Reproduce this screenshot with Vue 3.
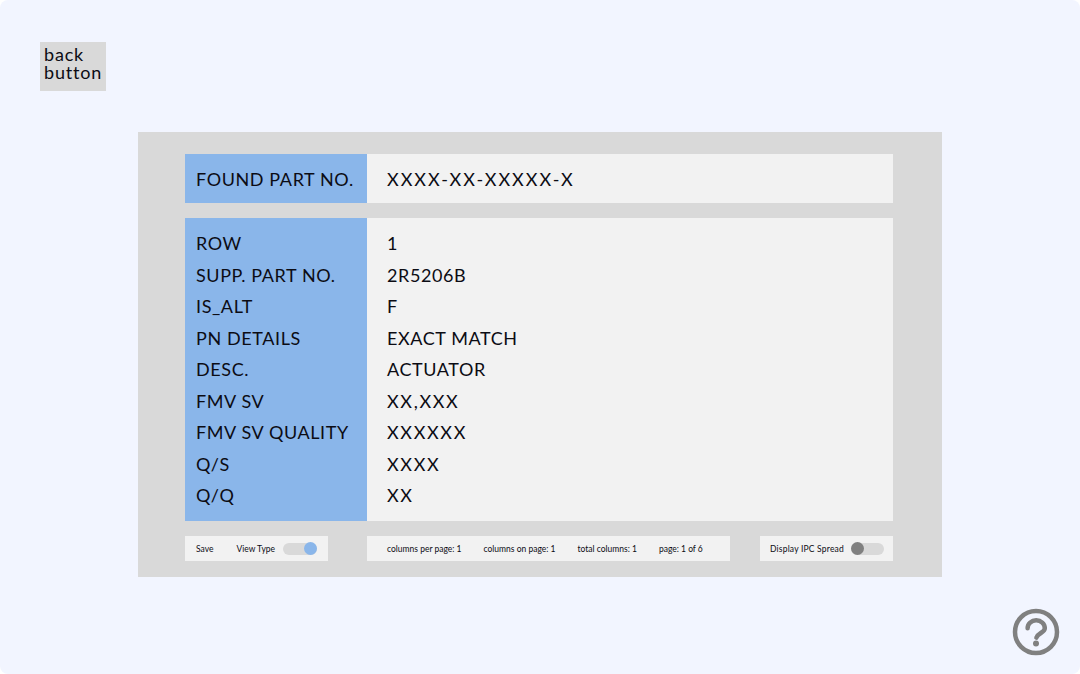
<script setup>
const rows = [
  ['ROW', '1'],
  ['SUPP. PART NO.', '2R5206B'],
  ['IS_ALT', 'F'],
  ['PN DETAILS', 'EXACT MATCH'],
  ['DESC.', 'ACTUATOR'],
  ['FMV SV', 'XX,XXX', true],
  ['FMV SV QUALITY', 'XXXXXX', true],
  ['Q/S', 'XXXX', true],
  ['Q/Q', 'XX', true],
]
const stats = ['columns per page: 1', 'columns on page: 1', 'total columns: 1', 'page: 1 of 6']
</script>

<template>
  <main class="page">
    <button class="back">back<br />button</button>
    <section class="panel">
      <div class="table found">
        <div class="labels"><div class="line">FOUND PART NO.</div></div>
        <div class="values"><div class="line mask-long">XXXX-XX-XXXXX-X</div></div>
      </div>
      <div class="table details">
        <div class="labels">
          <div v-for="r in rows" :key="r[0]" class="line">{{ r[0] }}</div>
        </div>
        <div class="values">
          <div v-for="r in rows" :key="r[0]" class="line" :class="{ mask: r[2] }">{{ r[1] }}</div>
        </div>
      </div>
      <div class="footer">
        <div class="box left">
          <span class="save">Save</span>
          <span class="view">View Type</span>
          <span class="toggle on"><i></i></span>
        </div>
        <div class="box middle">
          <span v-for="s in stats" :key="s">{{ s }}</span>
        </div>
        <div class="box right">
          <span>Display IPC Spread</span>
          <span class="toggle off"><i></i></span>
        </div>
      </div>
    </section>
    <svg class="help" viewBox="0 0 48 48" width="48" height="48" aria-label="help">
      <circle cx="24" cy="24" r="21" fill="none" stroke="#808080" stroke-width="4.5" />
      <path d="M15.6 20.2a8.6 7.9 0 0 1 17.2 0c0 4.4-7 4.8-8.4 9.4" fill="none" stroke="#808080" stroke-width="4.5" stroke-linecap="round" />
      <circle cx="24" cy="35.6" r="3" fill="#808080" />
    </svg>
  </main>
</template>

<style>
html, body { margin: 0; background: #ffffff; }
</style>

<style scoped>
.page {
  width: 1080px;
  height: 674px;
  box-sizing: border-box;
  background: #f2f5ff;
  border-radius: 8px;
  padding: 42px 0 0 40px;
  position: relative;
  overflow: hidden;
  font-family: "Lato", "Open Sans", sans-serif;
  color: #0c0c14;
}
.back {
  display: block;
  width: 66px;
  height: 49px;
  padding: 0 0 8px 4px;
  margin: 0;
  border: 0;
  background: #d9d9d9;
  color: inherit;
  font: inherit;
  font-size: 18px;
  line-height: 18px;
  text-align: left;
  letter-spacing: 0.8px;
}
.panel {
  width: 804px;
  height: 445px;
  box-sizing: border-box;
  margin: 41px 0 0 98px;
  padding: 22px 49px 0 47px;
  background: #d9d9d9;
}
.table {
  display: flex;
  font-size: 18px;
  letter-spacing: 0.6px;
}
.found { height: 49px; }
.details { height: 303px; margin-top: 15px; }
.labels {
  width: 182px;
  box-sizing: border-box;
  padding-left: 11px;
  background: #8ab6ea;
}
.values {
  flex: 1;
  padding-left: 20px;
  background: #f2f2f2;
}
.mask { letter-spacing: 1.65px; }
.mask-long { letter-spacing: 2px; }
.found .line { line-height: 51px; }
.details .labels, .details .values { padding-top: 10px; }
.details .line { height: 31.5px; line-height: 31.5px; white-space: nowrap; }
.footer {
  display: flex;
  margin-top: 15px;
}
.box {
  height: 25px;
  background: #f2f2f2;
  display: flex;
  align-items: center;
  font-size: 8.5px;
  white-space: nowrap;
  box-sizing: border-box;
}
.left { width: 143px; padding-left: 11px; }
.view { margin-left: 23px; }
.left .toggle { margin-left: 8px; width: 34px; }
.middle { width: 363px; margin-left: 39px; padding-left: 20px; gap: 22px; }
.right { width: 133px; margin-left: 30px; padding-left: 10px; letter-spacing: 0.2px; }
.right .toggle { margin-left: 7px; }
.toggle {
  display: block;
  position: relative;
  width: 33px;
  height: 12px;
  border-radius: 6px;
  background: #d9d9d9;
}
.toggle i {
  position: absolute;
  top: -0.5px;
  width: 13px;
  height: 13px;
  border-radius: 50%;
}
.on i { right: 0; background: #8ab6ea; }
.off i { left: 0; background: #808080; }
.help {
  position: absolute;
  left: 1012px;
  top: 608px;
}
</style>
